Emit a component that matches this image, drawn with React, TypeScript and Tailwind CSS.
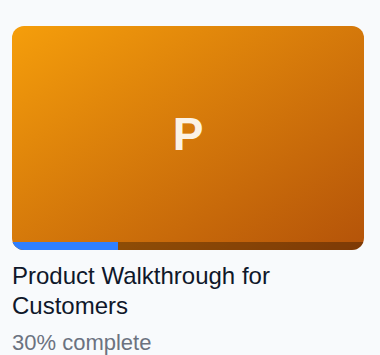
import React from "react";

const course = {
  initial: "P",
  title: "Product Walkthrough for Customers",
  progress: 30,
};

export default function App() {
  return (
    <div className="min-h-screen w-full bg-[#f8fafc] px-3 pt-[26px] font-['Liberation_Sans',Arial,sans-serif]">
      <div className="w-[352px]">
        {/* thumbnail + progress */}
        <div className="flex h-[224px] flex-col overflow-hidden rounded-xl bg-gradient-to-br from-[#f59e0b] to-[#b45309]">
          <div className="flex flex-1 items-center justify-center">
            <span className="text-[46px] font-bold leading-none text-white/90">{course.initial}</span>
          </div>
          <div className="h-2 w-full bg-black/30">
            <div className="h-full bg-[#3080ff]" style={{ width: `${course.progress}%` }} />
          </div>
        </div>

        <h3 className="mt-[11px] text-2xl leading-tight text-[#0f172a]">{course.title}</h3>
        <p className="mt-[7px] text-[22px] leading-[30px] text-[#6b7280]">{course.progress}% complete</p>
      </div>
    </div>
  );
}
